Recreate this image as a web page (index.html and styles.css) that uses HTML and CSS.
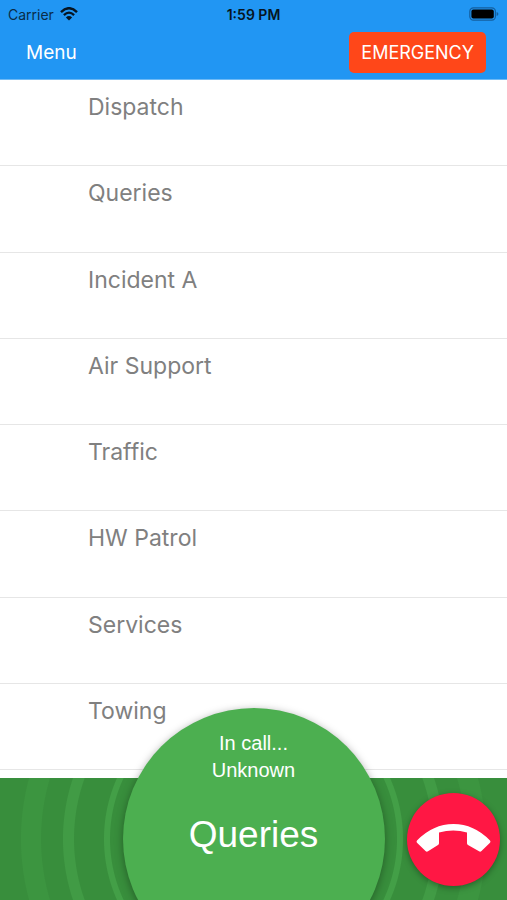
FILE: index.html
```html
<!DOCTYPE html>
<html lang="en">
<head>
<meta charset="utf-8">
<meta name="viewport" content="width=device-width, initial-scale=1">
<title>Channels</title>
<link rel="stylesheet" href="styles.css">
</head>
<body>
<div class="app">
  <header class="header">
    <div class="status">
      <div class="status-side">
        <span>Carrier</span>
        <svg class="wifi" viewBox="0 0 18 14" aria-hidden="true">
          <path d="M1 5.1Q9-2.7 17 5.1" fill="none" stroke="#061522" stroke-width="2.4"/>
          <path d="M3.9 8.1Q9 3.2 14.1 8.1" fill="none" stroke="#061522" stroke-width="2.3"/>
          <path d="M9 13.6L5.9 10.5Q9 7.7 12.1 10.5Z" fill="#061522"/>
        </svg>
      </div>
      <span class="time">1:59 PM</span>
      <div class="status-side status-end">
        <svg class="battery" viewBox="0 0 30 14" aria-hidden="true">
          <rect x="0.8" y="0.8" width="25.6" height="12.4" rx="3.6" fill="none" stroke="#145f9f" stroke-width="1.2"/>
          <rect x="2.4" y="2.4" width="22.4" height="9.2" rx="2" fill="#000"/>
          <path d="M27.6 5Q29.4 5.6 29.4 7T27.6 9Z" fill="#145f9f"/>
        </svg>
      </div>
    </div>
    <nav class="toolbar">
      <button class="menu" type="button">Menu</button>
      <button class="emergency" type="button">EMERGENCY</button>
    </nav>
  </header>
  <main class="main">
    <ul class="channels">
      <li>Dispatch</li>
      <li>Queries</li>
      <li>Incident A</li>
      <li>Air Support</li>
      <li>Traffic</li>
      <li>HW Patrol</li>
      <li>Services</li>
      <li>Towing</li>
    </ul>
  </main>
  <footer class="call-bar">
    <button class="talk" type="button">
      <span>In call...</span>
      <span>Unknown</span>
      <span class="talk-channel">Queries</span>
    </button>
    <button class="hang-up" type="button" aria-label="Hang up">
      <svg viewBox="0 0 93 93" aria-hidden="true">
        <path d="M10 47.5Q26 31 46.500 31Q67 31 83 47.500Q84 48.700 83 49.800L74.500 58Q73.300 59.200 72 58.300L61 52Q60 51.400 60 50.200V39.500Q46.500 35.500 32 39.500V50.200Q32 51.400 31 52L21 58.300Q19.700 59.200 18.500 58L10 49.800Q9 48.700 10 47.500Z" fill="#fff"/>
      </svg>
    </button>
  </footer>
</div>
</body>
</html>
```

FILE: styles.css
```css
* {
  box-sizing: border-box;
}

body {
  margin: 0;
  background: #fff;
  font-family: Inter, "Liberation Sans", sans-serif;
}

button {
  border: 0;
  padding: 0;
  font: inherit;
  color: #fff;
  background: none;
  cursor: pointer;
}

.app {
  display: flex;
  flex-direction: column;
  min-height: 100vh;
  overflow: hidden;
}

.header {
  background: #2196f3;
  border-bottom: 1px solid #6fbaf5;
}

.status {
  display: flex;
  align-items: center;
  height: 28px;
  padding: 0 8px;
  font-size: 14px;
  color: #0a2c48;
}

.status-side {
  display: flex;
  flex: 1;
  align-items: center;
  gap: 6px;
}

.status-end {
  justify-content: flex-end;
}

.wifi {
  width: 18px;
  height: 14px;
}

.battery {
  width: 30px;
  height: 14px;
}

.time {
  font-weight: 600;
  color: #061522;
}

.toolbar {
  display: flex;
  align-items: center;
  justify-content: space-between;
  padding: 4px 21px 6px 26px;
}

.menu {
  font-size: 19px;
}

.emergency {
  height: 41px;
  padding: 0 12px;
  border-radius: 5px;
  background: #ff4719;
  font-size: 18px;
}

.main {
  display: flex;
  flex: 1;
  padding-bottom: 8px;
}

.channels {
  display: flex;
  flex: 1;
  flex-direction: column;
  margin: 0;
  padding: 0;
  list-style: none;
}

.channels li {
  flex: 1;
  padding: 12px 88px 0;
  border-bottom: 1px solid #e6e6e6;
  font-size: 23px;
  line-height: 30px;
  color: #808080;
}

.call-bar {
  position: relative;
  display: flex;
  align-items: center;
  justify-content: flex-end;
  height: 122px;
  padding: 0 7px;
  background: radial-gradient(
    circle at 50% 61px,
    #388e3c 143px,
    #439f47 144px 149px,
    #388e3c 150px 179px,
    #419b45 180px 190px,
    #388e3c 191px 212px,
    #3c9540 213px 232px,
    #388e3c 233px
  );
}

.talk {
  position: absolute;
  top: -70px;
  left: 50%;
  display: flex;
  flex-direction: column;
  align-items: center;
  width: 262px;
  height: 262px;
  margin-left: -131px;
  padding-top: 22px;
  border-radius: 50%;
  background: #4caf50;
  box-shadow: 0 2px 8px rgba(0, 0, 0, 0.35);
  font-family: "Liberation Sans", Arial, sans-serif;
  font-size: 20px;
  line-height: 27px;
}

.talk-channel {
  margin-top: 28px;
  font-size: 37px;
  line-height: 46px;
}

.hang-up {
  width: 93px;
  height: 93px;
  border-radius: 50%;
  background: #ff1744;
  box-shadow: 0 2px 6px rgba(0, 0, 0, 0.35);
}

.hang-up svg {
  display: block;
  width: 100%;
}
```
